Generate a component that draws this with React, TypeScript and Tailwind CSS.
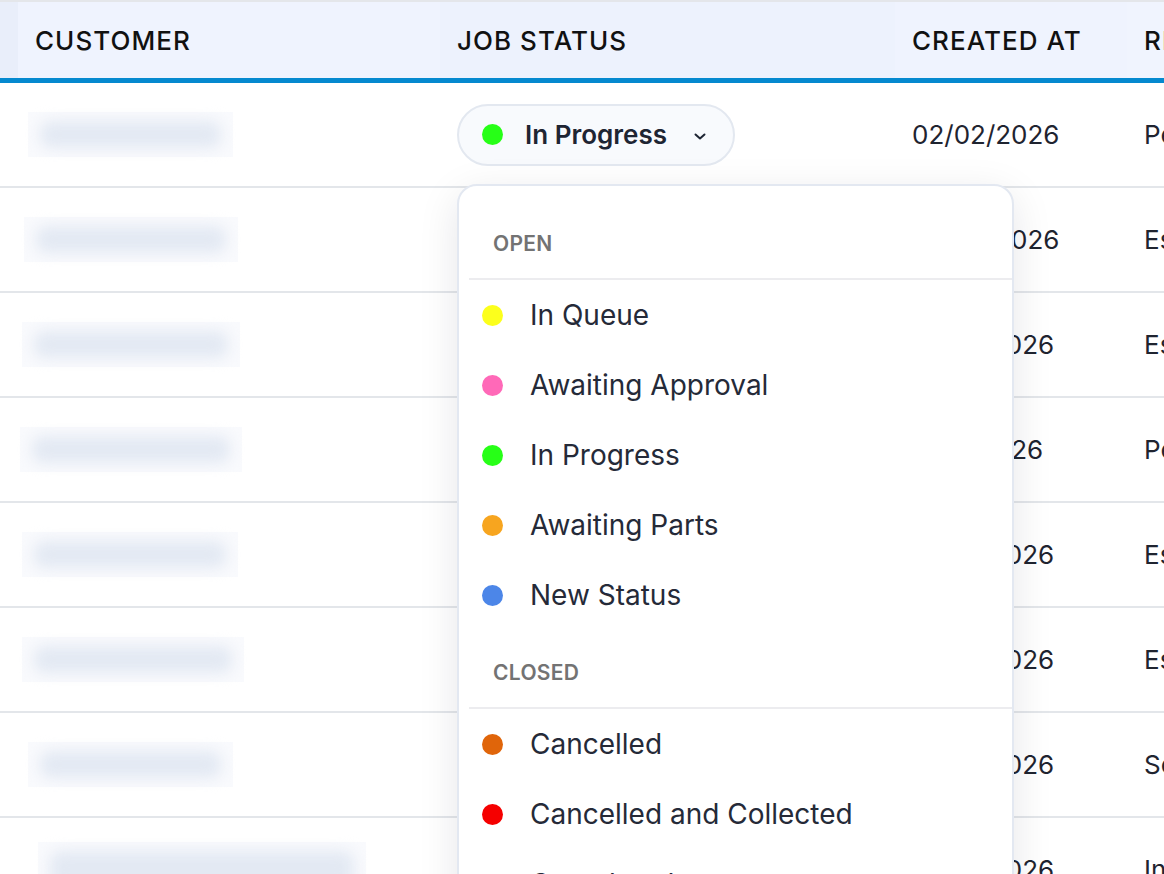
import React from "react";

const cols = "grid grid-cols-[18px_422px_455px_232px_1fr]";

type Row = { date: string; ref: string; ph: string; big?: boolean };

const rows: Row[] = [
  { date: "02/02/2026", ref: "Pending", ph: "ml-[10px] w-[205px]" },
  { date: "02/02/2026", ref: "Estimate", ph: "ml-[6px] w-[214px]" },
  { date: "01/02/2026", ref: "Estimate", ph: "ml-[4px] w-[218px]" },
  { date: "11/01/2026", ref: "Pending", ph: "ml-[2px] w-[222px]" },
  { date: "01/02/2026", ref: "Estimate", ph: "ml-[4px] w-[216px]" },
  { date: "01/02/2026", ref: "Estimate", ph: "ml-[4px] w-[222px]" },
  { date: "01/02/2026", ref: "Service", ph: "ml-[10px] w-[205px]" },
  { date: "01/02/2026", ref: "Inspection", ph: "ml-[20px] w-[328px]", big: true },
];

type Item = { label: string; color: string };
const openItems: Item[] = [
  { label: "In Queue", color: "bg-[#fcff1c]" },
  { label: "Awaiting Approval", color: "bg-[#ff69b8]" },
  { label: "In Progress", color: "bg-[#27ff17]" },
  { label: "Awaiting Parts", color: "bg-[#f7a51f]" },
  { label: "New Status", color: "bg-[#4c86e8]" },
];
const closedItems: Item[] = [
  { label: "Cancelled", color: "bg-[#e0650a]" },
  { label: "Cancelled and Collected", color: "bg-[#f50000]" },
  { label: "Completed", color: "bg-[#3d63f2]" },
  { label: "Collected", color: "bg-[#8a8a8a]" },
];

function Chevron() {
  return (
    <svg width="14" height="9" viewBox="0 0 14 9" fill="none" className="shrink-0">
      <path d="M2.5 2.5 L7 6.5 L11.5 2.5" stroke="#1e2533" strokeWidth="2" strokeLinecap="round" strokeLinejoin="round" />
    </svg>
  );
}

function MenuItem({ item }: { item: Item }) {
  return (
    <div className="flex h-[70px] items-center pl-[23px]">
      <span className={`h-[21px] w-[21px] shrink-0 rounded-full ${item.color}`} />
      <span className="ml-[27px] text-[28px] leading-none text-[#252a38]">{item.label}</span>
    </div>
  );
}

function GroupLabel({ text }: { text: string }) {
  return (
    <div>
      <div className="pl-[34px] pt-[31px] pb-[22px] text-[21px] font-semibold leading-[24px] tracking-[0.015em] text-[#737373]">
        {text}
      </div>
      <div className="ml-[10px] h-[2px] bg-[#ececef]" />
    </div>
  );
}

function Placeholder({ cls, big }: { cls: string; big?: boolean }) {
  return (
    <div className={`${cls} relative ${big ? "h-[56px]" : "h-[45px]"} shrink-0 bg-[#f9fafd]`}>
      <div className="absolute inset-x-[12px] inset-y-[9px] rounded-[10px] bg-[#e3e9f3] blur-[7px]" />
      {big && <div className="absolute right-[-2px] top-[32px] h-[24px] w-[3px] bg-[#1c8ee0]" />}
    </div>
  );
}

export default function App() {
  return (
    <div
      className="relative h-[874px] w-[1164px] overflow-hidden bg-white"
      style={{ fontFamily: "Inter, 'Noto Sans', sans-serif" }}
    >
      <div className="h-[2px] bg-[#e4e6ea]" />
      {/* header */}
      <div className={`${cols} h-[81px] border-b-[5px] border-[#0589cf] text-[26px] font-medium tracking-[0.04em] text-[#111]`}>
        <div className="bg-[#e9eefa]" />
        <div className="flex items-center bg-[#eff3fe] pl-[17px]">CUSTOMER</div>
        <div className="flex items-center bg-[#edf2fd] pl-[17px]">JOB STATUS</div>
        <div className="flex items-center bg-[#eff3fe] pl-[17px]">CREATED AT</div>
        <div className="flex items-center whitespace-nowrap bg-[#f0f4fe] pl-[17px]">REFERENCE</div>
      </div>

      {/* rows */}
      {rows.map((r, i) => (
        <div key={i} className={`${cols} h-[105px] grid-rows-[103px] border-b-2 border-[#e3e6ea] text-[26px] text-[#1f2430]`}>
          <div />
          <div className="flex items-center">
            <Placeholder cls={r.ph} big={r.big} />
          </div>
          <div className="flex items-center pl-[17px]">
            {i === 0 && (
              <div className="flex h-[62px] items-center rounded-full border-2 border-[#e3e8f0] bg-[#f8fafd] pl-[23px] pr-[26px]">
                <span className="h-[21px] w-[21px] rounded-full bg-[#27ff17]" />
                <span className="ml-[22px] text-[26px] font-semibold leading-none text-[#1e2533]">In Progress</span>
                <span className="ml-[26px] mt-[4px]">
                  <Chevron />
                </span>
              </div>
            )}
          </div>
          <div className="flex items-center pl-[17px]">{r.date}</div>
          <div className="flex items-center whitespace-nowrap pl-[17px]">{r.ref}</div>
        </div>
      ))}

      {/* dropdown menu overlay */}
      <div className="absolute left-[457px] top-[184px] w-[557px] overflow-hidden rounded-[20px] border-2 border-[#e3e8f1] bg-white pt-[15px] shadow-[0_10px_40px_rgba(15,23,42,0.10)]">
        <GroupLabel text="OPEN" />
        {openItems.map((it) => (
          <MenuItem key={it.label} item={it} />
        ))}
        <GroupLabel text="CLOSED" />
        {closedItems.map((it) => (
          <MenuItem key={it.label} item={it} />
        ))}
      </div>
    </div>
  );
}
